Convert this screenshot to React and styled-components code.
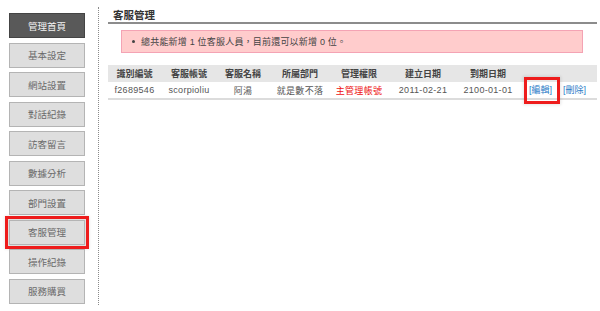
import React from "react";
import styled, { createGlobalStyle } from "styled-components";

const GlobalStyle = createGlobalStyle`
  html, body {
    margin: 0;
    padding: 0;
    background: #fff;
    font-family: "Liberation Sans", "Noto Sans CJK TC", sans-serif;
  }
`;

const menu = [
  "管理首頁",
  "基本設定",
  "網站設置",
  "對話紀錄",
  "訪客留言",
  "數據分析",
  "部門設置",
  "客服管理",
  "操作紀錄",
  "服務購買",
];

const columns = ["識別編號", "客服帳號", "客服名稱", "所屬部門", "管理權限", "建立日期", "到期日期", ""];

function App() {
  return (
    <Page>
      <GlobalStyle />
      <Sidebar>
        {menu.map((item, i) => (
          <MenuButton key={item} active={i === 0} marked={item === "客服管理"}>
            {item}
          </MenuButton>
        ))}
      </Sidebar>
      <Main>
        <Title>客服管理</Title>
        <Notice>
          <Bullet />
          總共能新增 1 位客服人員，目前還可以新增 0 位。
        </Notice>
        <Table>
          <HeadRow>
            {columns.map((c, i) => (
              <HeadCell key={i}>{c}</HeadCell>
            ))}
          </HeadRow>
          <Row>
            <Cell>f2689546</Cell>
            <Cell>scorpioliu</Cell>
            <Cell>阿湯</Cell>
            <Cell>就是數不落</Cell>
            <Cell red>主管理帳號</Cell>
            <Cell>2011-02-21</Cell>
            <Cell>2100-01-01</Cell>
            <Actions>
              <ActionLink marked>[編輯]</ActionLink>
              <ActionLink>[刪除]</ActionLink>
            </Actions>
          </Row>
        </Table>
      </Main>
    </Page>
  );
}

export default App;

const Page = styled.div`
  display: flex;
  flex-direction: row;
  width: 600px;
  height: 311px;
  overflow: hidden;
`;

const Sidebar = styled.div`
  display: flex;
  flex-direction: column;
  row-gap: 4.5px;
  width: 89px;
  height: 292px;
  margin-top: 7px;
  padding: 6px 0 0 9px;
  border-right: 1px dotted #8a8a8a;
  box-sizing: content-box;
  flex-shrink: 0;
`;

const MenuButton = styled.div`
  width: 76px;
  height: 25px;
  box-sizing: border-box;
  display: flex;
  align-items: center;
  justify-content: center;
  font-size: 9.5px;
  font-family: "Noto Sans CJK TC", sans-serif;
  color: ${(p) => (p.active ? "#f2f2f2" : "#6a6a6a")};
  background: ${(p) => (p.active ? "#595959" : "#dedede")};
  border: 1px solid ${(p) => (p.active ? "#444" : "#b4b4b4")};
  outline: ${(p) => (p.marked ? "3px solid #ee1c1c" : "none")};
  outline-offset: 1px;
  box-shadow: ${(p) => (p.marked ? "0 0 3px 4px rgba(0,0,0,0.12)" : "none")};
`;

const Main = styled.div`
  flex: 1;
  padding: 0 3px 0 9px;
  display: flex;
  flex-direction: column;
`;

const Title = styled.div`
  height: 24px;
  box-sizing: border-box;
  padding: 8px 0 0 5px;
  font-family: "Noto Sans CJK TC", serif;
  font-weight: bold;
  font-size: 10.5px;
  line-height: 14px;
  color: #333;
  border-bottom: 2px solid #8c8c8c;
`;

const Notice = styled.div`
  display: flex;
  align-items: center;
  margin: 6px 14px 0 13px;
  height: 23px;
  box-sizing: border-box;
  padding-left: 10px;
  background: #ffcccc;
  border: 1px solid #f4a3b4;
  font-family: "Liberation Sans", "Noto Sans CJK TC", sans-serif;
  font-size: 9px;
  color: #444;
  letter-spacing: 0.2px;
`;

const Bullet = styled.span`
  width: 3px;
  height: 3px;
  border-radius: 50%;
  background: #444;
  margin-right: 6px;
`;

const Table = styled.div`
  margin-top: 12px;
  display: flex;
  flex-direction: column;
`;

const HeadRow = styled.div`
  display: grid;
  grid-template-columns: 53px 56px 52px 62px 56px 72px 58px 1fr;
  height: 17px;
  align-items: center;
  background: #e6e6e6;
`;

const Row = styled(HeadRow)`
  height: 16px;
  background: #fff;
  border-bottom: 2px solid #dcdcdc;
`;

const HeadCell = styled.div`
  text-align: center;
  font-family: "Noto Sans CJK TC", serif;
  font-weight: bold;
  font-size: 9px;
  color: #444;
`;

const Cell = styled.div`
  text-align: center;
  font-family: "Liberation Sans", "Noto Sans CJK TC", sans-serif;
  font-size: 9px;
  letter-spacing: 0.3px;
  color: ${(p) => (p.red ? "#ee1111" : "#555")};
`;

const Actions = styled.div`
  display: flex;
  align-items: center;
  column-gap: 11px;
  padding-left: 12px;
`;

const ActionLink = styled.a`
  display: inline-block;
  font-family: "Liberation Sans", "Noto Sans CJK TC", sans-serif;
  font-size: 9px;
  line-height: 11px;
  color: #2a7cc7;
  cursor: pointer;
  outline: ${(p) => (p.marked ? "3px solid #ee1c1c" : "none")};
  padding: ${(p) => (p.marked ? "5px 5px 5px 2px" : "0")};
  margin: ${(p) => (p.marked ? "-5px -5px -5px -2px" : "0")};
  box-shadow: ${(p) => (p.marked ? "0 0 3px 4px rgba(0,0,0,0.1)" : "none")};
`;
